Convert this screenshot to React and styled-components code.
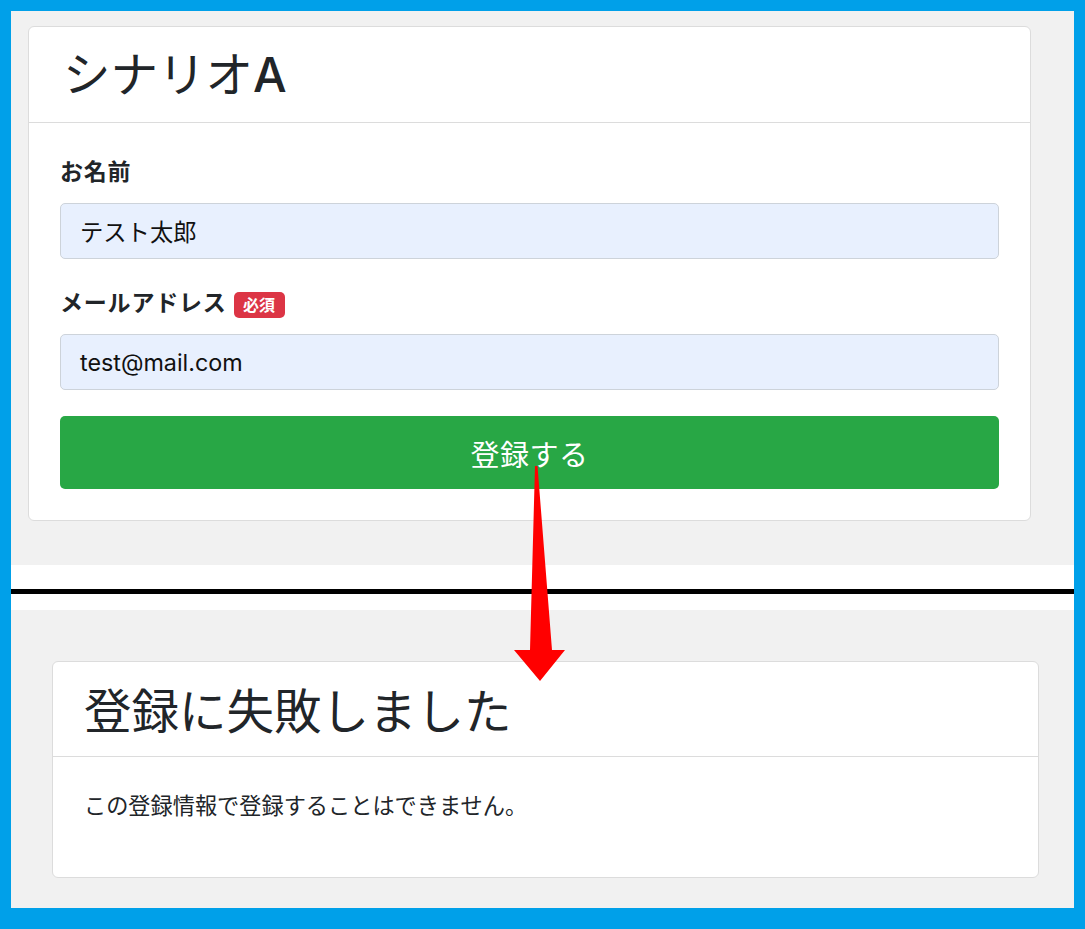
import styled, { createGlobalStyle } from "styled-components";

const GlobalStyle = createGlobalStyle`
  html, body {
    margin: 0;
    padding: 0;
    background: #ffffff;
  }
  body {
    font-family: Inter, "Noto Sans CJK JP", sans-serif;
    color: #212529;
  }
`;

const Frame = styled.div`
  position: relative;
  width: 1085px;
  height: 929px;
  box-sizing: border-box;
  border: solid #00a0e9;
  border-width: 11px 11px 21px 11px;
  display: flex;
  flex-direction: column;
  background: #ffffff;
`;

const Section = styled.section`
  background: #f1f1f1;
  padding: ${(p) => p.$pad};
  height: ${(p) => p.$h}px;
  box-sizing: border-box;
`;

const Divider = styled.div`
  height: 45px;
  display: flex;
  align-items: center;
  background: #ffffff;

  &::before {
    content: "";
    display: block;
    width: 100%;
    height: 5px;
    margin-top: 7px;
    background: #000000;
  }
`;

const Card = styled.div`
  background: #ffffff;
  border: 1px solid #dcdcdc;
  border-radius: 6px;
  box-sizing: border-box;
  height: ${(p) => p.$h}px;
  display: flex;
  flex-direction: column;
`;

const CardHeader = styled.div`
  height: ${(p) => p.$h}px;
  box-sizing: border-box;
  border-bottom: 1px solid #dcdcdc;
  padding: 0 31px;
  display: flex;
  align-items: center;
`;

const Title = styled.h1`
  margin: ${(p) => p.$mt || 0}px 0 0 ${(p) => p.$ml || 0}px;
  font-size: 47.5px;
  font-weight: 400;
  line-height: 1.2;
  color: #212529;

  b {
    font-weight: 500;
  }
`;

const CardBody = styled.div`
  padding: ${(p) => p.$pad};
  display: flex;
  flex-direction: column;
`;

const Label = styled.label`
  display: flex;
  align-items: center;
  gap: 7px;
  font-size: 23px;
  font-weight: 700;
  line-height: 33px;
  letter-spacing: 0.8px;
  margin-bottom: 14px;
`;

const Badge = styled.span`
  display: inline-flex;
  align-items: center;
  justify-content: center;
  width: 51px;
  height: 26px;
  border-radius: 5px;
  background: #dc3545;
  color: #ffffff;
  font-size: 16px;
  font-weight: 700;
  letter-spacing: 0;
  margin-top: 3px;
`;

const Input = styled.div`
  height: 56px;
  box-sizing: border-box;
  border: 1px solid #cdd3da;
  border-radius: 5px;
  background: #e8f0fe;
  padding: 0 19px;
  display: flex;
  align-items: center;
  font-size: 23.3px;
  color: #111;
  margin-bottom: ${(p) => p.$mb}px;
`;

const Button = styled.button`
  height: 73px;
  border: none;
  border-radius: 5px;
  background: #28a745;
  color: #ffffff;
  font-family: inherit;
  font-size: 29px;
  font-weight: 400;
  letter-spacing: 0.5px;
  padding: 0;
`;

const Message = styled.p`
  margin: 0;
  font-size: 22.2px;
  line-height: 33px;
`;

const Arrow = styled.svg`
  position: absolute;
  left: -11px;
  top: -11px;
  width: 1085px;
  height: 929px;
  pointer-events: none;
`;

export default function App() {
  return (
    <>
      <GlobalStyle />
      <Frame>
        <Section $pad="15px 43px 0 17px" $h={554}>
          <Card $h={495}>
            <CardHeader $h={97}>
              <Title $ml={3}>
                シナリオ<b>A</b>
              </Title>
            </CardHeader>
            <CardBody $pad="33px 31px 31px">
              <Label>お名前</Label>
              <Input $mb={28}>テスト太郎</Input>
              <Label>
                メールアドレス<Badge>必須</Badge>
              </Label>
              <Input $mb={26}>test@mail.com</Input>
              <Button>登録する</Button>
            </CardBody>
          </Card>
        </Section>
        <Divider />
        <Section $pad="51px 35px 0 41px" $h={298}>
          <Card $h={217}>
            <CardHeader $h={95}>
              <Title $mt={4}>登録に失敗しました</Title>
            </CardHeader>
            <CardBody $pad="32px 31px">
              <Message>この登録情報で登録することはできません。</Message>
            </CardBody>
          </Card>
        </Section>
        <Arrow viewBox="0 0 1085 929">
          <polygon
            points="535,466 537.5,466 552,650 565,650 540,681 514,650 530,650"
            fill="#ff0000"
          />
        </Arrow>
      </Frame>
    </>
  );
}
